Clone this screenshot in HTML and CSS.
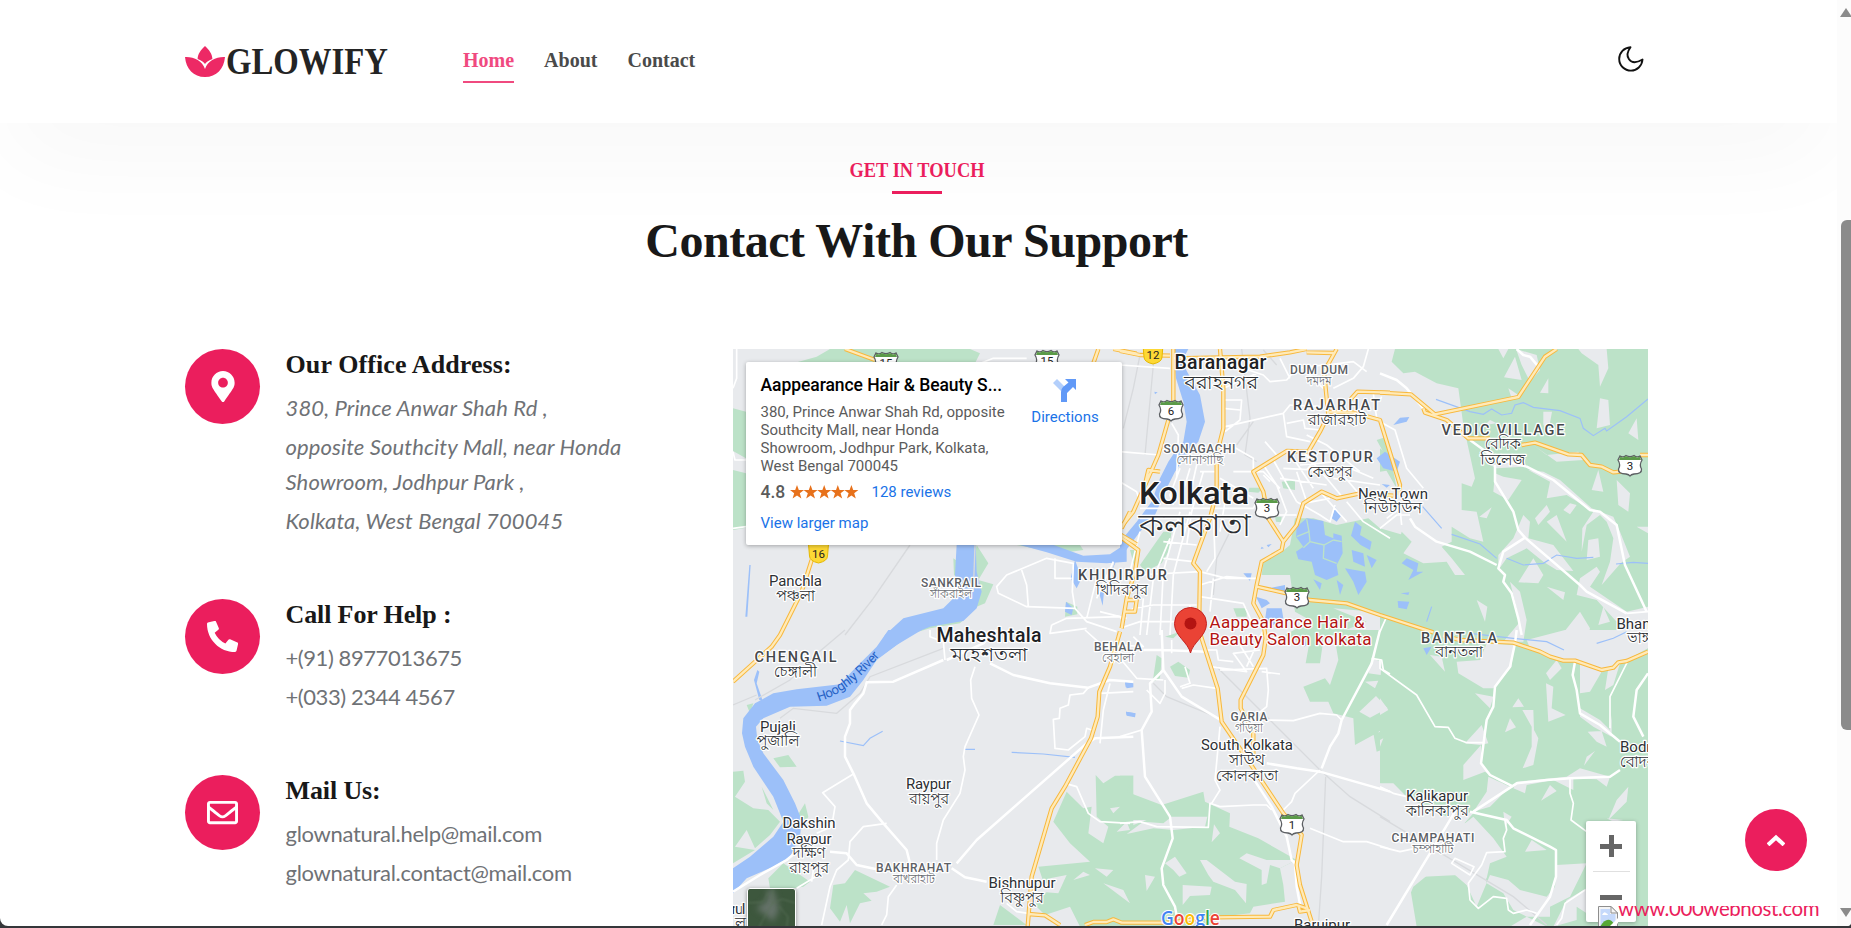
FILE: index.html
```html
<!DOCTYPE html>
<html lang="en">
<head>
<meta charset="utf-8">
<title>Glowify - Contact</title>
<link rel="stylesheet" href="styles.css">
</head>
<body>
<div class="window">
<div class="page">
  <header class="header">
    <a class="logo">
      <svg class="lotus" width="40" height="31" viewBox="0 0 38 31" preserveAspectRatio="none"><path d="M19 0C23 3.500 26 8.500 26 13C22 14.500 20 16.500 19 18C18 16.500 16 14.500 12 13C12 8.500 15 3.500 19 0Z"/><path d="M0 11C8 10.500 16.500 14.500 19 23C21.500 14.500 30 10.500 38 11C37 23 30 31 19 31C8 31 1 23 0 11Z"/></svg>
      <svg class="wordmark" width="170" height="44" viewBox="0 0 170 44"><text x="1" y="32" textLength="162" lengthAdjust="spacingAndGlyphs">GLOWIFY</text></svg>
    </a>
    <nav class="nav"><a class="active">Home</a><a>About</a><a>Contact</a></nav>
    <svg class="moon" width="26" height="26" viewBox="0 0 26 26"><path d="M12.500 1.200C9 6 9 10.500 11 13.200C13.500 16.700 18.500 17 24.500 13.500C24 20 19 24.600 13 24.600C6.500 24.600 1.200 19.500 1.200 13C1.200 6.500 6 1.700 12.500 1.200Z"/></svg>
  </header>

  <section class="contact">
    <div class="section-head">
      <svg class="eyebrow" width="144" height="24" viewBox="0 0 144 24"><text x="4.500" y="19" textLength="135" lengthAdjust="spacingAndGlyphs">GET IN TOUCH</text></svg>
      <span class="rule"></span>
      <h2>Contact With Our Support</h2>
    </div>

    <div class="columns">
      <div class="details">
        <div class="item">
          <span class="badge"><svg width="24" height="31" viewBox="0 0 384 512"><path d="M172.300 501.700C27 291 0 269.400 0 192 0 86 86 0 192 0s192 86 192 192c0 77.400-27 99-172.300 309.700-9.500 13.800-29.900 13.800-39.400 0zM192 272c44.200 0 80-35.800 80-80s-35.800-80-80-80-80 35.800-80 80 35.800 80 80 80z"/></svg></span>
          <div class="text">
            <h3>Our Office Address:</h3>
            <address><span>380, Prince Anwar Shah Rd ,</span><span>opposite Southcity Mall, near Honda<br>Showroom, Jodhpur Park ,</span><span>Kolkata, West Bengal 700045</span></address>
          </div>
        </div>
        <div class="item call">
          <span class="badge"><svg width="31" height="31" viewBox="0 0 512 512"><path d="M493.400 351.400l-112-48a24 24 0 0 0-28 6.900l-49.600 60.600A370.700 370.700 0 0 1 126.600 193.700l60.600-49.600a24 24 0 0 0 6.900-28l-48-112A24.200 24.200 0 0 0 118.600.700l-104 24A24 24 0 0 0 0 48c0 256.500 207.900 464 464 464a24 24 0 0 0 23.400-18.600l24-104a24.300 24.300 0 0 0-18-38z"/></svg></span>
          <div class="text">
            <h3>Call For Help :</h3>
            <p><span>+(91) 8977013675</span><span>+(033) 2344 4567</span></p>
          </div>
        </div>
        <div class="item mail">
          <span class="badge"><svg width="31" height="31" viewBox="0 0 512 512"><path d="M464 64H48C21.500 64 0 85.500 0 112v288c0 26.500 21.500 48 48 48h416c26.500 0 48-21.500 48-48V112c0-26.500-21.500-48-48-48zm0 48v40.800c-22.400 18.300-58.200 46.700-134.600 106.500-16.800 13.200-50.200 45.100-73.400 44.700-23.200.400-56.600-31.500-73.400-44.700C106.200 199.500 70.400 171.100 48 152.800V112h416zM48 400V214.400c22.900 18.300 55.400 43.900 104.900 82.600 21.900 17.200 60.100 55.200 103.100 55 42.700.200 80.500-37.200 103.100-54.900 49.500-38.800 82-64.400 104.900-82.700V400H48z"/></svg></span>
          <div class="text">
            <h3>Mail Us:</h3>
            <p><span>glownatural.help@mail.com</span><span>glownatural.contact@mail.com</span></p>
          </div>
        </div>
      </div>

      <div class="map">
        <svg class="tiles" width="915" height="577" viewBox="733 349 915 577">
          <defs>
            <g id="us-shield"><path class="sh" d="M-10-9Q-7-7-4-9.500Q0-7 4-9.500Q7-7 10-9L12-5Q9 0 11.500 4Q12 9 4 9Q1 9.500 0 11Q-1 9.500-4 9Q-12 9-11.500 4Q-9 0-12-5Z"/><path class="shtop" d="M-9.500-8.500Q-7-6.500-4-9Q0-6.500 4-9Q7-6.500 9.500-8.500L11-5H-11Z"/></g>
            <path id="nh-shield" d="M-10-9H10L9 3Q9 8 0 10Q-9 8-9 3Z"/>
            <path id="river-name" d="M266 214Q352 192 456 70"/>
            <g id="highways">
              <g transform="translate(730 345) scale(.33333)"><path d="M345 12L435 45M1105 12L1090 55M1150 12L1220 26M1200 500L1175 550M1170 568L1220 598M245 645L215 740L150 870L125 905L9 1010"/></g>
              <g transform="translate(1120 345) scale(.33333)"><path d="M0 18L60 30L150 32M160 12V190M145 225L115 330L80 410L40 500L0 550M120 380L85 375L70 440M0 575L55 615L45 680L20 760L5 850M20 765H50L45 800H10M300 12L310 130V250L290 330V440L270 520L240 600L220 655L240 680L238 800M160 40L420 35L510 22L560 12M560 22L640 24M650 12L612 80L625 210L600 260L565 320L500 318L400 380L430 440L445 520L490 590M690 165L712 140L810 143M625 200L700 203L780 225L840 420L835 450M820 452L720 445L650 460L605 440L550 475L530 540L490 590L485 615L425 650L410 720L400 775L430 830L437 880L430 930L362 1065L362 1090L400 1160V1230M410 725L500 745L570 765L680 775L780 810L940 862M230 830L245 880L293 1030L305 1130L390 1255L490 1405L545 1470L530 1560L540 1620L575 1730"/></g>
              <g transform="translate(1380 345) scale(.33333)"><path d="M0 143L93 148L165 208L415 156L495 35L530 12M130 190L135 203L200 225L265 280H330M425 300L465 293L565 328L605 330L630 360L665 365L700 382L740 378M780 330H804M190 872L240 885L400 893L480 920L510 935L550 947H585L665 975L700 968L715 952L740 948L804 920"/></g>
              <g transform="translate(730 630) scale(.33333)"><path d="M1170 5L1140 110L1108 185L1103 260L1083 325L1005 470L965 535L905 740L893 890M895 852L945 856L990 885M1065 885L1090 876H1130L1150 868L1175 878H1320L1450 860"/></g>
              <g transform="translate(1120 630) scale(.33333)"><path d="M280 862L450 860L460 840L530 825L560 835M535 825L540 845L570 840"/></g>
            </g>
          </defs>

          <rect class="land" x="733" y="349" width="915" height="577"/>

          <g class="green">
            <g transform="translate(730 345) scale(.33333)"><path d="M9 190L48 200V340L9 318ZM9 375L48 385V548L9 555ZM190 55L260 35L300 12H720L750 25L735 55ZM740 600L775 655L745 705L790 718L765 775L740 785L690 835L600 850L565 860L600 840L700 820ZM860 600H1050L1060 615L990 625ZM1008 770L1042 785V808L1005 815ZM670 640L685 650V700L672 690Z"/></g>
            <g transform="translate(1120 345) scale(.33333)"><path d="M525 520L580 520L650 540L745 520L780 550L850 570V835L760 800L640 790L640 870H555L560 820L525 800L510 690H425L430 650L480 625L510 600ZM485 410L525 405V435L490 430ZM388 428H430L415 443L385 440ZM465 515H485L483 532L468 530ZM60 660L130 560H155L145 620L125 655L75 680ZM770 285L800 275L830 430L795 370L800 340ZM30 615H60L50 690ZM340 790H380V815H350ZM495 870L640 790L740 830L560 900Z"/></g>
            <g transform="translate(1380 345) scale(.33333)"><path d="M45 12H804V870H0V580H60L65 560L95 590L70 625L130 655L200 650L225 690L255 690L215 640L185 605L215 590V545L270 580L310 590L290 500L245 495V415L275 425L285 400L250 240L235 130L170 115L105 80L70 85L35 50ZM0 310L35 340L35 375L0 380Z"/></g>
            <g transform="translate(730 630) scale(.33333)"><path d="M9 425L40 422L45 455L15 500L70 535L115 540L150 575L120 615L75 655L50 600L15 650L75 660L9 700ZM130 385L175 375L200 410L150 412ZM95 470L130 540L110 520ZM200 560L225 520L235 560L215 600ZM115 745L160 700L240 755L220 770L175 778V790L120 775ZM310 765L345 760L375 720L480 770L440 785L400 790L425 812L390 820L360 880L350 825L330 875L300 835ZM810 825L890 885H790ZM1097 435L1120 460L1155 437H1210V890H1050L1020 830L945 855L915 825L950 785L925 710L1080 695L1020 640L970 575L1010 485L1060 535L1085 530L1075 610L1120 640L1135 590L1100 560ZM340 155L385 110L420 100L370 150ZM85 265L190 225L140 240ZM50 225L70 220L60 250Z"/></g>
            <g transform="translate(1120 630) scale(.33333)"><path d="M0 437H40L20 485L125 525L250 485L255 515L330 550L328 590L415 625L530 690L480 715L490 765L495 815L400 830L390 850L300 860L260 888H0V600L80 570H0ZM110 75L125 85L120 145L98 155ZM150 110L175 95L210 120L205 143L165 138ZM575 0L570 20L610 30L600 100H557ZM640 0H810V285L760 315L705 345L700 265L640 250L625 215L570 215L550 170L615 145L630 165L655 90ZM760 310L810 300V350L770 365ZM135 20L180 5L160 25Z"/></g>
            <g transform="translate(1380 630) scale(.33333)"><path d="M0 0H804V890H500L440 860L390 890H110L90 770L130 740L235 735L265 770L320 745L330 700L380 680L340 625L280 560L255 580L200 560L100 520L80 600L75 560L0 460Z"/></g>
          </g>

          <g class="land">
            <g transform="translate(1380 345) scale(.33333)"><path d="M405 35L425 105L372 97ZM355 12H385L370 40ZM408 12L470 30L480 75L450 110L425 60ZM505 100V145L480 143ZM595 12H680L685 70L660 125L655 60L605 25ZM385 130L415 150L395 160ZM490 200H516L505 260L490 240ZM660 160L685 165L690 240L650 250ZM770 220L775 285L745 265ZM330 225L350 235L315 240ZM460 300L500 330L595 320L610 345L530 350ZM330 360L425 340L430 365L350 370ZM370 395L425 405L385 465L340 440L345 385ZM445 375L490 380L540 405L635 490L660 500L700 515L720 560L750 635L722 655L665 720L690 650L700 580L680 530L660 510L620 540L605 620L607 550L640 500L560 450L500 460L510 410ZM655 375L670 440L635 435ZM710 405L750 445L745 500L715 480ZM570 475L590 480L570 508L550 495ZM500 480L510 500L475 540L465 520ZM335 487L320 520L298 515ZM530 510L560 590L500 530ZM430 510L450 530L445 580L520 600L580 678L530 675L490 650L440 610L380 640L355 675L355 630L400 580ZM770 545L804 545V565ZM625 585L655 580L660 635L620 645ZM460 640L490 690L475 715L415 712ZM650 665L660 680L630 725L740 800L804 785V870H710V830L650 765L590 750L600 700ZM500 725L555 742L550 765ZM290 765L322 785L315 830ZM390 710L420 740L440 825L430 890H370L420 830ZM600 800L630 850L620 890L545 870ZM670 785L690 830L655 840Z"/></g>
            <g transform="translate(730 630) scale(.33333)"><path d="M1140 535L1170 530L1150 550ZM1190 575L1200 600L1160 605ZM1095 715L1150 720L1130 740ZM1120 760L1180 780L1200 820ZM960 745L1010 735L985 790L930 785ZM1060 725L1080 735L1030 750Z"/></g>
            <g transform="translate(1120 630) scale(.33333)"><path d="M20 612L70 575L130 580L155 560H262L255 590L160 600L100 595ZM282 583L300 610L275 637ZM165 680L200 730L178 740L160 720L135 700ZM240 690L260 690L345 755L380 762L378 820L345 780L280 755L265 735ZM358 685L380 670L440 690L530 690L480 715L450 705L440 760L425 765V720ZM75 735L105 740L80 783ZM188 765L275 770L270 795L210 798L188 825ZM735 155L775 152L765 175ZM768 198L803 235L750 263L718 245ZM755 85L785 95L782 135L745 130Z"/></g>
            <g transform="translate(1380 630) scale(.33333)"><path d="M555 0H804V55L740 90L665 120L580 95L520 85L450 55L440 30ZM150 75L185 80L195 125ZM230 95L300 90L320 40L400 45L395 110L340 175H310L235 130ZM285 190L340 200L330 235ZM530 90L545 115L510 150L498 130ZM600 100L665 125L630 185L600 190ZM685 115L720 100L700 165L675 180ZM498 160L520 170L515 235L557 255L505 275ZM415 205L432 230L397 232ZM427 240H460L462 300L475 325L460 405L428 415L455 350V290ZM390 265L408 292L375 307ZM600 235L660 270L690 300L695 255V320L640 290L600 260ZM623 305L665 303L680 350L650 335ZM645 363L612 407L620 380ZM0 205L25 240L0 255ZM305 285L325 340L300 345L255 340ZM303 345V400L325 430L390 475L315 425L250 450L250 405ZM280 545L320 485L325 440L390 470L330 530ZM400 475L410 455L560 440L600 415L690 440L680 470L650 448L580 445V480L520 450L440 465L435 490ZM510 465L530 483L483 512ZM745 470L740 515L685 570L710 510ZM680 565L730 570L700 575ZM0 330L10 325L0 350ZM0 460L40 460L80 500L200 560L210 540L280 550L200 640L210 680L100 770L50 890H0ZM370 545L395 560L375 590ZM455 630L500 660L435 665ZM210 680L280 710L320 660L375 665L310 700L320 760L370 790L400 840L440 860H510V830L570 800L620 700L530 705L525 770L500 800L420 780L385 750L330 735L290 830L260 765L225 735ZM520 890L560 810L620 775V850L590 830V870Z"/></g>
          </g>

          <g class="water">
            <g transform="translate(730 345) scale(.33333)"><path d="M680 598H737L740 680L755 740L740 790L700 828L600 845L540 870L500 900L430 950L465 870L520 820L640 790L690 740L675 690ZM862 598H965L1060 632L1140 628L1190 595V650L1130 655L1040 650L950 622ZM1035 645L1055 700L1040 730L1022 700ZM1105 735L1122 740L1118 782ZM58 660L62 660L52 815H46ZM1155 650L1160 645L1140 690ZM1008 770L1030 790L1025 810L1005 800Z"/></g>
            <g transform="translate(1120 345) scale(.33333)"><path d="M160 12H205L185 50L240 150L255 230L235 290L205 320L185 350L165 380L140 430L105 510L60 560L0 640V590L50 530L95 470L120 400L145 350L165 320L190 290L200 230L190 170L168 100ZM530 545L560 520L610 528L615 570L640 580L640 565L665 572L668 625L650 660L655 690L620 705L585 690L575 650L535 643L528 620L550 605L528 575ZM645 487L665 510L650 530L635 520ZM705 530L725 545L720 570L755 590L750 615L722 600L693 572ZM695 615L730 625L735 665L700 650ZM675 670L735 680L740 710L715 750L700 710ZM740 630L770 645L755 670ZM650 705L670 720L660 750ZM580 703L605 715L600 735ZM370 685H395L390 708ZM445 730L495 720V740L460 740ZM408 755L440 765L450 775L425 790ZM440 790L485 790L490 820L460 840L435 825ZM770 340L795 320L840 350L830 380L790 370ZM103 140L113 142L105 148ZM440 600L455 597L445 607ZM425 605L432 610L422 612ZM548 870L560 900L552 905Z"/></g>
            <g transform="translate(1120 345) scale(.33333)"><path class="bank" d="M560 522L567 560L530 575M567 560L570 590L550 608M570 590L612 600L640 585M612 600L610 640L650 655M665 590L640 585"/></g>
            <g transform="translate(1380 345) scale(.33333)"><path d="M40 240L60 218L88 216L80 230ZM5 417L30 420L20 428ZM65 655L80 640L115 655L110 680L130 680L85 705L100 675ZM62 745L88 742L85 750ZM53 768L88 770L80 793L55 788ZM130 910L155 905L140 930Z"/><path class="stream" d="M168 163L270 200L310 208L335 192L365 210L395 205L405 180L430 173L460 187L540 197L600 220L610 250L640 272L675 250L680 258L740 215L804 162M128 485L185 550M215 568L300 597L350 640M380 640L430 660L490 655L530 630L590 640L640 637M708 657L760 652L804 655M155 785L140 830"/><path class="stream" d="M270 865L400 880L500 890L552 915M650 895L700 880L740 860"/></g>
            <g transform="translate(730 630) scale(.33333)"><path d="M475 0H575L500 45L440 90L400 150L360 200L290 227L180 230L100 265L78 290L82 330L100 370L160 450L195 520L215 570L210 620L180 680L130 710L50 745L9 790V715L60 680L130 620L160 575L130 500L70 410L45 350L36 310L40 265L75 220L130 190L200 178L330 163L370 120L440 50ZM72 150L82 120L88 125L80 160L98 212L88 210ZM1185 158L1210 160V172L1190 175ZM1188 245L1215 250V260L1190 255Z"/><path class="stream" d="M330 333L400 347L420 325L458 304M702 358H735M845 367L940 372L1035 382"/></g>
            <g transform="translate(1120 630) scale(.33333)"><path d="M15 155L38 160L30 172H17ZM18 245L47 250L45 262L20 257Z"/></g>
          </g>

          <g class="rail">
            <g transform="translate(730 345) scale(.33333)"><path d="M540 600L430 760L345 870M735 600L730 740"/></g>
            <g transform="translate(1120 345) scale(.33333)"><path d="M95 12L100 60L75 330M365 12L390 220L375 330L410 350M60 30L40 130L10 250M330 560L290 640L280 750M430 15L470 60M350 300L400 230"/></g>
            <g transform="translate(730 630) scale(.33333)"><path d="M9 225L80 195M75 210L180 150L250 80L345 0M150 265L190 235L320 250L390 190L420 140L640 55"/></g>
            <g transform="translate(1120 630) scale(.33333)"><path d="M290 110L600 420L690 500L810 575M617 440L605 740L595 890M100 160L140 200L310 270"/></g>
            <g transform="translate(1380 630) scale(.33333)"><path d="M0 560L200 680L400 800L500 885"/></g>
          </g>

          <g class="roads">
            <g transform="translate(730 345) scale(.33333)"><path d="M20 12V100L9 130M9 320L15 345H48M9 550L48 545M700 75L790 40H890M800 725L830 690L950 640L1030 655L1027 740L1035 790L890 785L805 745ZM875 675L890 720L895 785M975 640V700H1025M1035 790L1070 830L1160 860M1100 700L1070 820M965 840L1010 820L1170 815M965 840L960 865L1070 850M1110 800L1190 820M1150 650L1100 760"/></g>
            <g transform="translate(1120 345) scale(.33333)"><path d="M0 60L150 70M0 410L50 440L60 470M0 320L120 330M155 235L175 270L170 400M310 165L365 165L360 225L315 260M310 130L380 100L410 85M310 190L360 195M315 245L490 205L510 180L600 185M490 205L500 275L570 290M500 235L550 225L555 250L600 255M435 290L470 330M340 305L400 340L400 380M180 370L150 450L160 480M210 370L180 470M250 380L215 500L200 600M290 380L240 380M230 360L210 450M60 490L400 490M60 520L170 520L220 555M150 580L100 700L80 870M180 500L130 680L120 870M210 500L160 690L150 870M60 560L30 680M130 590L230 600M130 640L220 650M50 690L240 680L320 700H410M240 720L320 695L380 700M240 755L370 775L395 830M280 500L285 640L260 680M300 400L400 460M320 440L300 560M340 380L430 380L480 430M430 360L470 420L500 500L480 540M460 345L530 470M480 400L620 420M490 370L680 380M520 340L580 430M550 320L620 400L670 460M585 345L560 375M530 380L560 470M540 360L650 350M530 470L600 510L630 530L645 480M550 475L630 460M460 510H530M560 270L620 300L670 340L720 380M640 400L780 420M660 380L720 450M600 440L680 530M680 470L730 530L810 580M690 370L760 400M0 820L40 790L100 780H230M0 850L60 830H200M60 870L70 760M180 800V870M210 780V870M280 700L270 800M340 60L430 90L450 110L500 105L530 70L610 60M560 80L610 130M480 40L510 100M430 390L450 410M410 470L400 490M700 100L730 65L745 12M640 130L700 100M620 60L700 50L740 80M760 145L770 220"/></g>
            <g transform="translate(1380 345) scale(.33333)"><path class="wide" d="M0 85L50 105L80 130L130 190M410 12L430 30L450 35L475 65M270 285L345 340L440 365L520 405L630 495L660 500L710 540L735 660L800 800M435 578L600 720L620 740L740 805M90 520L105 545L170 590L270 620L350 660M345 360V410L400 500L415 555L435 578L370 620L355 670L375 690L370 710L395 745L415 820L425 870"/><path d="M0 230L45 255L80 370L130 430M0 550L50 510H90M20 520L60 490L65 540M20 815L0 860M740 805L804 800M0 165L5 155"/></g>
            <g transform="translate(730 630) scale(.33333)"><path class="wide" d="M640 90L490 155L410 157L400 190L375 220L360 240V280L345 320V380L370 430L410 520L460 580L530 660L540 700M650 90L760 40L800 0M780 100L850 135L960 160L1075 173L1140 150L1210 155M1210 320L1095 325L1070 340L740 630L680 700M9 785L90 735L170 690L200 665M300 665L350 670L380 705L440 718M665 715L705 742L770 755"/><path d="M735 110L722 150L725 205L747 255L705 350L700 380L705 420L690 490L640 570L620 640V690M370 432L278 488L315 530L305 590L260 610M470 580L400 590L360 635L355 690L320 720L300 770L275 885M500 765L475 800L470 855L455 885M1075 173L1060 190L1020 195L1015 225L990 235L988 265L970 268L975 355L1015 360L1065 320L1070 295L1085 300M1005 460L1040 470L1075 550L1110 575L1200 580M1110 190L1210 185M1110 340L1120 240L1140 160M600 0V20L640 35L645 90M1065 0L1110 40L1170 50M200 775L290 720M245 755L250 720M830 820L860 845L895 850M1150 100L1170 60L1160 20"/></g>
            <g transform="translate(1120 630) scale(.33333)"><path class="wide" d="M125 0L130 120L90 160L95 245L65 300L75 440L150 560L158 625L125 715L130 765L165 830L175 885M130 120L185 200L310 275M390 430L455 530L500 620L515 690L525 700L530 770L545 850M440 400L530 415L600 425L810 485M780 0L755 100L665 270L655 310L630 350L605 415M70 60H130L260 65"/><path d="M0 320L65 300M0 580L60 575L110 590L265 592L270 520L300 530L400 525L440 525L455 540M0 85L50 145L130 150M0 45L70 50L40 20M155 30V70M195 110L210 160L180 170M185 175L220 165L290 175M255 60L290 60L295 90L340 95M270 110L380 125L340 70L420 60M300 120L440 115L445 180L440 230L390 270M425 125L480 132M445 270L520 272L600 250L650 255L665 270M300 290L285 450L300 480L275 520M600 420L525 490L515 515L490 540M570 595L670 635L740 635L810 657M755 85L785 90L790 120L810 132M430 0L380 110M80 180L120 220L135 190V150M360 45L400 110"/></g>
            <g transform="translate(1380 630) scale(.33333)"><path class="wide" d="M410 0L405 40L390 110L345 170L340 230L320 270L310 345L303 400L330 435L400 470M280 545L410 460L500 450L570 445L690 440L720 420M270 545L380 570L400 595L510 650L528 660V740L510 800L450 885M225 545L150 670L20 885M804 130L770 180L760 260L790 320M585 95L578 135L590 180L600 250L660 285L720 335"/><path d="M0 90V115L110 195L165 290L205 292L225 325L260 338H310M745 90L690 200L690 295M0 470L40 490L80 500M570 445V490L580 520L573 570L620 605M375 570L380 600L370 625L375 665L320 668L305 705L265 760L270 810L295 835L340 800L380 805L385 840L400 850L440 840L470 850M215 700L270 735L282 710L225 685ZM530 885L545 865L555 820L615 780M0 650L60 665L130 650"/></g>
          </g>

          <use href="#highways" class="hw-case"/>
          <use href="#highways" class="hw-fill"/>

          <g class="shields">
            <use href="#us-shield" x="886" y="362"/><text x="886" y="366.500">15</text>
            <use href="#us-shield" x="1047" y="360"/><text x="1047" y="364.500">15</text>
            <use href="#us-shield" x="1171" y="410"/><text x="1171" y="415">6</text>
            <use href="#us-shield" x="1267" y="508"/><text x="1267" y="512">3</text>
            <use href="#us-shield" x="1297" y="597"/><text x="1297" y="601">3</text>
            <use href="#us-shield" x="1630" y="465"/><text x="1630" y="469.500">3</text>
            <use href="#us-shield" x="1292" y="824"/><text x="1292" y="828.500">1</text>
            <use href="#nh-shield" class="nh" x="1153" y="354"/><text x="1153" y="359">12</text>
            <use href="#nh-shield" class="nh" x="818.500" y="553"/><text x="818.500" y="557.500">16</text>
          </g>

          <g class="labels">
            <g transform="translate(730 630) scale(.33333)"><text class="river"><textPath href="#river-name" textLength="232">Hooghly River</textPath></text></g>
            <text class="huge" x="1194" y="504" textLength="110" lengthAdjust="spacingAndGlyphs">Kolkata</text><text class="bn-huge" x="1194.500" y="536" textLength="112" lengthAdjust="spacingAndGlyphs">কলকাতা</text>
            <text class="city" x="1220.500" y="369" textLength="92">Baranagar</text><text class="bn-city" x="1221" y="389" textLength="74" lengthAdjust="spacingAndGlyphs">বরাহনগর</text>
            <text class="city" x="989" y="641.500" textLength="105">Maheshtala</text><text class="bn-city" x="989" y="661" textLength="77" lengthAdjust="spacingAndGlyphs">মহেশতলা</text>
            <text class="small" x="1319" y="374" textLength="58">DUM DUM</text><text class="bn-small" x="1319" y="385" textLength="25" lengthAdjust="spacingAndGlyphs">দমদম</text>
            <text class="area" x="1336.500" y="410" textLength="87">RAJARHAT</text><text class="bn" x="1337" y="425" textLength="59" lengthAdjust="spacingAndGlyphs">রাজারহাট</text>
            <text class="small" x="1199.500" y="453" textLength="72">SONAGACHI</text><text class="bn-small" x="1200" y="464" textLength="47" lengthAdjust="spacingAndGlyphs">সোনাগাছি</text>
            <text class="area" x="1330" y="461.500" textLength="86">KESTOPUR</text><text class="bn" x="1330" y="477" textLength="45" lengthAdjust="spacingAndGlyphs">কেস্তপুর</text>
            <text class="town" x="1393" y="498.500" textLength="70">New Town</text><text class="bn" x="1393" y="513" textLength="58" lengthAdjust="spacingAndGlyphs">নিউটাউন</text>
            <text class="area" x="1503" y="434.500" textLength="123">VEDIC VILLAGE</text><text class="bn" x="1503" y="449" textLength="36" lengthAdjust="spacingAndGlyphs">বেদিক</text><text class="bn" x="1503" y="464.500" textLength="45" lengthAdjust="spacingAndGlyphs">ভিলেজ</text>
            <text class="area" x="1122.500" y="580" textLength="89">KHIDIRPUR</text><text class="bn" x="1122" y="595" textLength="52" lengthAdjust="spacingAndGlyphs">খিদিরপুর</text>
            <text class="town" x="795.500" y="585.500" textLength="53">Panchla</text><text class="bn" x="795.500" y="600.500" textLength="39" lengthAdjust="spacingAndGlyphs">পঞ্চলা</text>
            <text class="small" x="951" y="587" textLength="60">SANKRAIL</text><text class="bn-small" x="951" y="598" textLength="42" lengthAdjust="spacingAndGlyphs">সাঁকরাইল</text>
            <text class="area" x="795.500" y="661.500" textLength="82">CHENGAIL</text><text class="bn" x="795.500" y="676.500" textLength="43" lengthAdjust="spacingAndGlyphs">চেঙ্গালী</text>
            <text class="small" x="1118" y="651" textLength="48">BEHALA</text><text class="bn-small" x="1118" y="662" textLength="32" lengthAdjust="spacingAndGlyphs">বেহালা</text>
            <text class="area" x="1459" y="642.500" textLength="76">BANTALA</text><text class="bn" x="1459" y="657" textLength="48" lengthAdjust="spacingAndGlyphs">বানতলা</text>
            <text class="town start" x="1616.500" y="629">Bhangar</text><text class="bn start" x="1627" y="643">ভাঙ্গড়</text>
            <text class="town" x="778" y="732" textLength="36">Pujali</text><text class="bn" x="778" y="746" textLength="43" lengthAdjust="spacingAndGlyphs">পুজালি</text>
            <text class="town" x="928.500" y="789" textLength="45">Raypur</text><text class="bn" x="929" y="804" textLength="40" lengthAdjust="spacingAndGlyphs">রায়পুর</text>
            <text class="town" x="809" y="828" textLength="53">Dakshin</text><text class="town" x="809" y="843.500" textLength="45">Raypur</text><text class="bn" x="809" y="857.500" textLength="33" lengthAdjust="spacingAndGlyphs">দক্ষিণ</text><text class="bn" x="809" y="873" textLength="40" lengthAdjust="spacingAndGlyphs">রায়পুর</text>
            <text class="small" x="913.500" y="872" textLength="75">BAKHRAHAT</text><text class="bn-small" x="914" y="883" textLength="42" lengthAdjust="spacingAndGlyphs">বাখরাহাট</text>
            <text class="town" x="1022" y="888" textLength="67">Bishnupur</text><text class="bn" x="1022" y="902.500" textLength="43" lengthAdjust="spacingAndGlyphs">বিষ্ণুপুর</text>
            <text class="small" x="1249" y="721" textLength="37">GARIA</text><text class="bn-small" x="1249" y="732" textLength="28" lengthAdjust="spacingAndGlyphs">গড়িয়া</text>
            <text class="town" x="1247" y="750" textLength="92">South Kolkata</text><text class="bn" x="1247" y="765" textLength="36" lengthAdjust="spacingAndGlyphs">সাউথ</text><text class="bn" x="1247" y="780.500" textLength="62" lengthAdjust="spacingAndGlyphs">কোলকাতা</text>
            <text class="town" x="1322" y="929.500" textLength="56">Baruipur</text>
            <text class="town" x="1437" y="801" textLength="62">Kalikapur</text><text class="bn" x="1437" y="816" textLength="63" lengthAdjust="spacingAndGlyphs">কালিকাপুর</text>
            <text class="small" x="1433" y="842" textLength="83">CHAMPAHATI</text><text class="bn-small" x="1433" y="853" textLength="41" lengthAdjust="spacingAndGlyphs">চম্পাহাটি</text>
            <text class="town start" x="1620" y="751.500">Bodra</text><text class="bn start" x="1620" y="766.500">বোদরা</text>
            <text class="town start" x="731.500" y="913.500" textLength="14">rul</text><text class="bn start" x="735" y="928">ল</text>
            <text class="place" x="1209.500" y="627.500" textLength="155">Aappearance Hair &amp;</text><text class="place" x="1209.500" y="645" textLength="162">Beauty Salon kolkata</text>
          </g>

          <g class="pin"><path d="M1190.500 653C1188 642 1174.500 636 1174.500 623.500A16 16 0 0 1 1206.500 623.500C1206.500 636 1193 642 1190.500 653Z"/><circle cx="1190.500" cy="623.500" r="6"/></g>
          <text class="google" x="1161" y="925" textLength="59" lengthAdjust="spacingAndGlyphs"><tspan class="b">G</tspan><tspan class="r">o</tspan><tspan class="y">o</tspan><tspan class="b">g</tspan><tspan class="g">l</tspan><tspan class="r">e</tspan></text>
        </svg>

        <div class="place-card">
          <div class="place-info">
            <strong>Aappearance Hair &amp; Beauty S...</strong>
            <p>380, Prince Anwar Shah Rd, opposite<br>Southcity Mall, near Honda<br>Showroom, Jodhpur Park, Kolkata,<br>West Bengal 700045</p>
            <div class="rating"><b>4.8</b>
              <svg width="70" height="15" viewBox="0 0 70 15"><defs><path id="star" d="M7 0L8.800 5H14L9.800 8.300L11.400 13.600L7 10.400L2.600 13.600L4.200 8.300L0 5H5.200Z"/></defs><use href="#star"/><use href="#star" x="13.600"/><use href="#star" x="27.200"/><use href="#star" x="40.800"/><use href="#star" x="54.400"/></svg>
              <a>128 reviews</a></div>
            <a class="larger">View larger map</a>
          </div>
          <a class="directions">
            <svg width="24" height="24" viewBox="0 0 24 24"><path class="faint" d="M0 4L4 0L13 9L9 13Z"/><path d="M12 0H23V11L20 8L14 14V23H8V13Q8 10 10 8L15.500 3.500Z"/></svg>
            <span>Directions</span>
          </a>
        </div>

        <div class="zoom"><i class="plus"></i><i class="line"></i><i class="minus"></i></div>
        <div class="satellite"><svg width="47" height="44" viewBox="0 0 47 44"><path class="haze" d="M20 0L25 0L31 20L25 33L18 26L8 19L19 12Z"/><path class="veins" d="M0 14L15 13L20 4M25 0L24 15L34 10L47 14M8 44L17 27L24 15M31 17L40 28L38 44"/></svg></div>
      </div>
    </div>
  </section>

  <a class="to-top"><svg width="18" height="12" viewBox="0 0 18 12"><path d="M2.500 9.500L9 3.500L15.500 9.500"/></svg></a>
  <div class="host">
    <svg width="20" height="24" viewBox="0 0 20 24"><path class="doc" d="M.500 .500H13L19.500 7V24H.500Z"/><path class="sky" d="M2.500 3H12V8H17.500V24H2.500Z"/><path class="cloud" d="M4 9Q6 5 8 7Q10 8 10 9Z"/><path class="hill" d="M2.500 20Q10 8 17 19V24H2.500Z"/><path class="tear" d="M20 12L8 24H13L20 17Z"/><path class="doc" d="M13 .500V7H19.500Z"/></svg>
    <span>www.000webhost.com</span>
  </div>
</div>
<div class="scrollbar"><span class="up"></span><span class="thumb"></span><span class="down"></span></div>
</div>
</body>
</html>
```
FILE: styles.css
```css
* { box-sizing: border-box; }
body { margin: 0; background: #35373a; overflow: hidden; }
.window { display: flex; width: 1851px; height: 926px; background: #fff; overflow: hidden; border-radius: 0 0 4px 8px; }
.page { position: relative; width: 1837px; height: 926px; overflow: hidden; font-family: Lato, sans-serif; color: #6f7276; }

.header { position: relative; display: flex; align-items: flex-start; height: 123px; padding: 0 193px 0 185px; background: #fff; box-shadow: 0 40px 100px -8px rgba(0, 0, 0, .036); }
.logo { display: flex; padding-top: 42px; width: 278px; }
.lotus { flex: none; margin-top: 4px; fill: #ed2965; }
.wordmark { display: block; flex: none; font: bold 38px "Liberation Serif", serif; fill: #242424; }
.nav { display: flex; gap: 30px; padding-top: 47px; font: bold 20px/26px "Liberation Serif", serif; color: #4a4a4a; }
.nav a { height: 36px; }
.nav .active { color: #f04a7f; border-bottom: 2px solid #f04a7f; }
.moon { margin: 46px 0 0 auto; fill: none; stroke: #111; stroke-width: 1.9; stroke-linejoin: round; }

.section-head { position: relative; display: flex; flex-direction: column; align-items: center; padding-top: 35px; height: 226px; margin-right: 4px; }
.eyebrow { font: bold 20px "Liberation Serif", serif; fill: #eb1e5d; }
.rule { width: 50px; height: 3px; margin-top: 9px; background: #eb1e5d; }
.section-head h2 { margin: 19px 0 0; font: bold 48px/55px "Liberation Serif", serif; letter-spacing: -.45px; color: #181818; }
.columns { display: flex; padding-left: 185px; }
.details { width: 548px; }
.item { display: flex; gap: 25px; height: 250px; }
.item.call { height: 176px; }
.badge { display: flex; align-items: center; justify-content: center; width: 75px; height: 75px; border-radius: 50%; background: #eb1e5d; }
.badge svg { fill: #fff; }
.text { padding-left: .5px; }
.text h3 { margin: 0; font: bold 26px/32px "Liberation Serif", serif; letter-spacing: .1px; color: #181818; }
.text p, .text address { margin: 9px 0 0; font-size: 22px; line-height: 35px; }
.text address { font-style: italic; letter-spacing: .12px; }
.call p { letter-spacing: -.43px; }
.call h3, .mail h3 { letter-spacing: -.12px; }
.mail p { letter-spacing: -.3px; }
.text span { display: block; margin-bottom: 4px; white-space: nowrap; }

.map { position: relative; width: 915px; height: 577px; overflow: hidden; font-family: Roboto, sans-serif; }
.tiles { display: block; }
.land { fill: #e8eaed; }
.green { fill: #bce2c8; }
.water { fill: #9cc0f9; }
.bank { fill: none; stroke: #bce2c8; stroke-width: 4; }
.stream { fill: none; stroke: #9cc0f9; stroke-width: 3.500; }
.rail { fill: none; stroke: #d8dadd; stroke-width: 4; }
.roads { fill: none; stroke: #fff; stroke-width: 5; stroke-linejoin: round; }
.roads .wide { stroke-width: 7.500; }
.hw-case, .hw-fill { fill: none; stroke-linejoin: round; }
.hw-case { stroke: #f8b83c; stroke-width: 13; }
.hw-fill { stroke: #ffeab8; stroke-width: 7; }
.sh { fill: #fff; stroke: #5c5f63; stroke-width: 1.3; }
.shtop { fill: #5a9a48; }
.nh { fill: #fdd835; stroke: #e5b800; stroke-width: 1; }
.shields text { font-size: 11.500px; font-weight: 400; text-anchor: middle; fill: #222; }
.labels text { text-anchor: middle; paint-order: stroke; stroke: #fff; stroke-width: 2.500; stroke-linejoin: round; fill: #2d3034; font-family: Roboto, "Noto Sans Bengali", sans-serif; }
.labels .huge { font-size: 32px; font-weight: 500; fill: #202124; }
.labels .city { font-size: 19.500px; font-weight: 500; fill: #202124; }
.labels .area { font-size: 14.500px; font-weight: 500; fill: #45484c; }
.labels .small { font-size: 12px; font-weight: 500; fill: #5c6065; }
.labels .town { font-size: 15px; }
.labels .bn { font-size: 15.500px; font-weight: 300; }
.labels .bn-small { font-size: 12px; font-weight: 300; fill: #666a6f; }
.labels .bn-city { font-size: 20px; font-weight: 300; }
.labels .bn-huge { font-size: 32px; font-weight: 300; }
.labels .start { text-anchor: start; }
.labels .place { font-size: 17px; text-anchor: start; fill: #b31412; }
.labels .river { font-size: 39px; text-anchor: start; fill: #2560c5; stroke: none; }
.pin path { fill: #ea4335; stroke: #c5221f; }
.pin circle { fill: #b31412; }
.google { font: 600 20px "Open Sans", sans-serif; paint-order: stroke; stroke: #fff; stroke-width: 2; }
.b { fill: #4285f4; } .r { fill: #ea4335; } .y { fill: #fbbc05; } .g { fill: #34a853; }

.place-card { position: absolute; left: 13px; top: 13px; display: flex; width: 376px; height: 183px; padding: 13px 23px 0 14.500px; background: #fff; border-radius: 2px; box-shadow: 0 1px 4px rgba(0, 0, 0, .3); color: #5b5b5b; font-size: 15px; }
.place-info { flex: 1; white-space: nowrap; }
.place-info strong { display: block; font-size: 17.500px; line-height: 21px; font-weight: 500; letter-spacing: -.06px; color: #000; }
.place-info p { margin: 7px 0 0; line-height: 18px; }
.place-card a { color: #1a73e8; }
.rating { display: flex; align-items: center; height: 24px; margin-top: 5px; }
.rating b { font-size: 17.500px; font-weight: 500; width: 29px; }
.rating svg { fill: #e7711b; margin-right: 12px; }
.larger { display: block; margin-top: 10px; line-height: 18px; }
.directions { display: flex; flex-direction: column; align-items: center; width: 68px; padding-top: 4px; gap: 5px; }
.directions svg { fill: #6199f7; }
.directions .faint { fill: #b3cffb; }
.zoom { position: absolute; left: 853px; top: 472px; display: flex; flex-direction: column; align-items: center; width: 50px; height: 101px; padding-top: 14px; background: #fff; border-radius: 2px; box-shadow: 0 1px 4px rgba(0, 0, 0, .3); }
.plus { width: 22px; height: 22px; background: linear-gradient(#666, #666) center / 22px 5px no-repeat, linear-gradient(#666, #666) center / 5px 22px no-repeat; }
.line { width: 37px; height: 1px; margin-top: 14px; background: #e0e0e0; }
.minus { width: 22px; height: 5px; margin-top: 23px; background: #666; }
.satellite { position: absolute; left: 14px; top: 539px; width: 49px; height: 46px; border: 1.500px solid #fff; border-radius: 3px; background: #3d573d; box-shadow: 0 1px 4px rgba(0, 0, 0, .4); overflow: hidden; }
.haze { fill: #66736a; filter: blur(3px); }
.veins { fill: none; stroke: #587057; stroke-width: 1; filter: blur(1.2px); }

.to-top { position: absolute; left: 1745px; top: 809px; display: flex; align-items: center; justify-content: center; width: 62px; height: 62px; border-radius: 50%; background: #eb1e5d; }
.to-top svg { fill: none; stroke: #fff; stroke-width: 4; stroke-linecap: square; }
.host { position: absolute; left: 1598px; top: 906px; display: flex; width: 230px; height: 20px; overflow: hidden; color: #eb1e5d; }
.host svg { flex: none; }
.host span { font-size: 20.500px; line-height: 24px; margin-top: -10px; letter-spacing: -.43px; white-space: nowrap; }
.doc { fill: #f5f5f5; stroke: #8e8e8e; }
.sky { fill: #c5d9fb; } .cloud { fill: #fff; } .hill { fill: #57a836; } .tear { fill: #fff; }

.scrollbar { position: relative; width: 14px; height: 926px; background: #fcfcfc; display: flex; flex-direction: column; overflow: hidden; }
.up, .down { flex: none; width: 0; border: 6.500px solid transparent; margin-left: 3px; }
.up { border-top: 0; border-bottom: 9px solid #8b8b8b; margin-top: 8px; }
.thumb { flex: none; width: 15px; height: 510px; margin: 203px 0 0 4px; border-radius: 6px; background: #8b8b8b; }
.down { border-bottom: 0; border-top: 9px solid #8b8b8b; margin-top: 178px; }
```
